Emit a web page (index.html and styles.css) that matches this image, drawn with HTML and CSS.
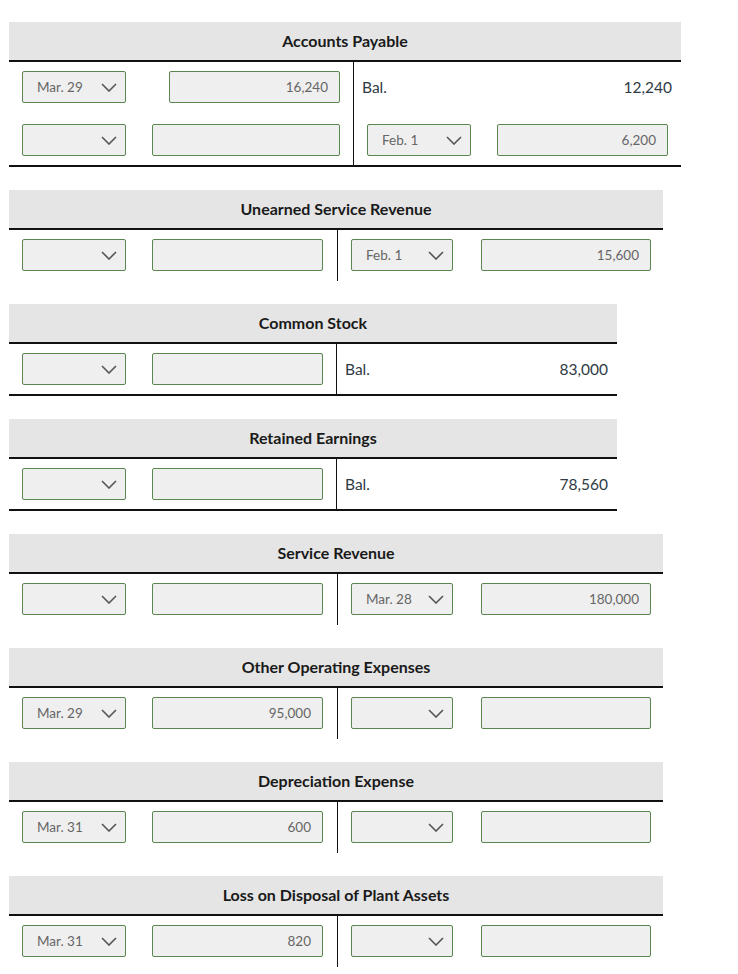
FILE: index.html
```html
<!DOCTYPE html>
<html lang="en">
<head>
<meta charset="utf-8">
<title>T-Accounts</title>
<link rel="stylesheet" href="styles.css">
</head>
<body>
<main class="ledger">

  <section class="acct acct-wide ruled">
    <div class="acct-head">Accounts Payable</div>
    <div class="acct-body">
      <div class="side side-l">
        <div class="row"><div class="sel"><span>Mar. 29</span><svg class="chev" viewBox="0 0 16 9"><path d="M1 1 L8 8 L15 1"/></svg></div><div class="inp">16,240</div></div>
        <div class="row"><div class="sel"><span></span><svg class="chev" viewBox="0 0 16 9"><path d="M1 1 L8 8 L15 1"/></svg></div><div class="inp inp-long"></div></div>
      </div>
      <div class="side side-r">
        <div class="row text-row"><span class="lbl">Bal.</span><span class="amt">12,240</span></div>
        <div class="row row-r"><div class="sel"><span>Feb. 1</span><svg class="chev" viewBox="0 0 16 9"><path d="M1 1 L8 8 L15 1"/></svg></div><div class="inp">6,200</div></div>
      </div>
    </div>
  </section>

  <section class="acct acct-std">
    <div class="acct-head">Unearned Service Revenue</div>
    <div class="acct-body">
      <div class="side side-l">
        <div class="row"><div class="sel"><span></span><svg class="chev" viewBox="0 0 16 9"><path d="M1 1 L8 8 L15 1"/></svg></div><div class="inp"></div></div>
      </div>
      <div class="side side-r">
        <div class="row"><div class="sel sel-r"><span>Feb. 1</span><svg class="chev" viewBox="0 0 16 9"><path d="M1 1 L8 8 L15 1"/></svg></div><div class="inp">15,600</div></div>
      </div>
    </div>
  </section>

  <section class="acct acct-narrow ruled">
    <div class="acct-head">Common Stock</div>
    <div class="acct-body">
      <div class="side side-l">
        <div class="row"><div class="sel"><span></span><svg class="chev" viewBox="0 0 16 9"><path d="M1 1 L8 8 L15 1"/></svg></div><div class="inp"></div></div>
      </div>
      <div class="side side-r">
        <div class="row text-row"><span class="lbl">Bal.</span><span class="amt">83,000</span></div>
      </div>
    </div>
  </section>

  <section class="acct acct-narrow ruled">
    <div class="acct-head">Retained Earnings</div>
    <div class="acct-body">
      <div class="side side-l">
        <div class="row"><div class="sel"><span></span><svg class="chev" viewBox="0 0 16 9"><path d="M1 1 L8 8 L15 1"/></svg></div><div class="inp"></div></div>
      </div>
      <div class="side side-r">
        <div class="row text-row"><span class="lbl">Bal.</span><span class="amt">78,560</span></div>
      </div>
    </div>
  </section>

  <section class="acct acct-std">
    <div class="acct-head">Service Revenue</div>
    <div class="acct-body">
      <div class="side side-l">
        <div class="row"><div class="sel"><span></span><svg class="chev" viewBox="0 0 16 9"><path d="M1 1 L8 8 L15 1"/></svg></div><div class="inp"></div></div>
      </div>
      <div class="side side-r">
        <div class="row"><div class="sel sel-r"><span>Mar. 28</span><svg class="chev" viewBox="0 0 16 9"><path d="M1 1 L8 8 L15 1"/></svg></div><div class="inp">180,000</div></div>
      </div>
    </div>
  </section>

  <section class="acct acct-std">
    <div class="acct-head">Other Operating Expenses</div>
    <div class="acct-body">
      <div class="side side-l">
        <div class="row"><div class="sel"><span>Mar. 29</span><svg class="chev" viewBox="0 0 16 9"><path d="M1 1 L8 8 L15 1"/></svg></div><div class="inp">95,000</div></div>
      </div>
      <div class="side side-r">
        <div class="row"><div class="sel sel-r"><span></span><svg class="chev" viewBox="0 0 16 9"><path d="M1 1 L8 8 L15 1"/></svg></div><div class="inp"></div></div>
      </div>
    </div>
  </section>

  <section class="acct acct-std">
    <div class="acct-head">Depreciation Expense</div>
    <div class="acct-body">
      <div class="side side-l">
        <div class="row"><div class="sel"><span>Mar. 31</span><svg class="chev" viewBox="0 0 16 9"><path d="M1 1 L8 8 L15 1"/></svg></div><div class="inp">600</div></div>
      </div>
      <div class="side side-r">
        <div class="row"><div class="sel sel-r"><span></span><svg class="chev" viewBox="0 0 16 9"><path d="M1 1 L8 8 L15 1"/></svg></div><div class="inp"></div></div>
      </div>
    </div>
  </section>

  <section class="acct acct-std">
    <div class="acct-head">Loss on Disposal of Plant Assets</div>
    <div class="acct-body">
      <div class="side side-l">
        <div class="row"><div class="sel"><span>Mar. 31</span><svg class="chev" viewBox="0 0 16 9"><path d="M1 1 L8 8 L15 1"/></svg></div><div class="inp">820</div></div>
      </div>
      <div class="side side-r">
        <div class="row"><div class="sel sel-r"><span></span><svg class="chev" viewBox="0 0 16 9"><path d="M1 1 L8 8 L15 1"/></svg></div><div class="inp"></div></div>
      </div>
    </div>
  </section>

</main>
</body>
</html>
```

FILE: styles.css
```css
* { box-sizing: border-box; }

html, body {
  margin: 0;
  padding: 0;
  background: #ffffff;
}

body {
  font-family: Lato, "Open Sans", "Liberation Sans", sans-serif;
  color: #222;
}

.ledger {
  padding: 22px 0 0 9px;
  display: flex;
  flex-direction: column;
  align-items: flex-start;
}

.acct {
  margin-bottom: 23px;
}

.acct-wide { width: 672px; }
.acct-std { width: 654px; }
.acct-narrow { width: 608px; }

.acct-head {
  height: 40px;
  background: #e5e5e5;
  border-bottom: 2px solid #111;
  display: flex;
  align-items: center;
  justify-content: center;
  font-weight: 700;
  font-size: 16px;
  color: #1a1a1a;
  padding-bottom: 1px;
}

.acct-body {
  display: grid;
}
.acct-wide .acct-body { grid-template-columns: 344px 328px; }
.acct-std .acct-body { grid-template-columns: 328px 326px; }
.acct-narrow .acct-body { grid-template-columns: 327px 281px; }

.ruled .acct-body {
  border-bottom: 2px solid #111;
}

.side {
  display: flex;
  flex-direction: column;
  gap: 21px;
  padding: 9px 0 10px;
}
.ruled .side {
  padding-bottom: 9px;
}

.side-r {
  border-left: 1px solid #111;
}

.row {
  display: flex;
  align-items: center;
  height: 32px;
}

.side-l .row { padding: 0 13px 0 13px; }
.acct-std .side-l .row { padding-right: 14px; }
.acct-std .side-r .row { padding: 0 12px 0 13px; }
.acct-wide .side-r .row-r { padding: 0 13px 0 13px; }

.text-row {
  justify-content: space-between;
  font-size: 15.5px;
  color: #2f3a44;
}
.side-r .text-row { padding: 0 9px 0 8px; }

.sel {
  width: 104px;
  height: 32px;
  border: 1px solid #5a8750;
  border-radius: 2px;
  background: #efefef;
  display: flex;
  align-items: center;
  justify-content: space-between;
  padding: 0 8px 0 14px;
  font-size: 13.5px;
  color: #666;
}
.sel-r { width: 102px; }

.chev {
  width: 16px;
  height: 9px;
  fill: none;
  stroke: #555;
  stroke-width: 1.6;
}

.inp {
  margin-left: auto;
  width: 171px;
  height: 32px;
  border: 1px solid #5a8750;
  border-radius: 2px;
  background: #efefef;
  display: flex;
  align-items: center;
  justify-content: flex-end;
  padding: 0 11px;
  font-size: 13.5px;
  color: #666;
}
.side-r .inp { width: 170px; }
.acct-wide .side-r .inp { width: 171px; }
.inp-long { width: 188px; }
```
